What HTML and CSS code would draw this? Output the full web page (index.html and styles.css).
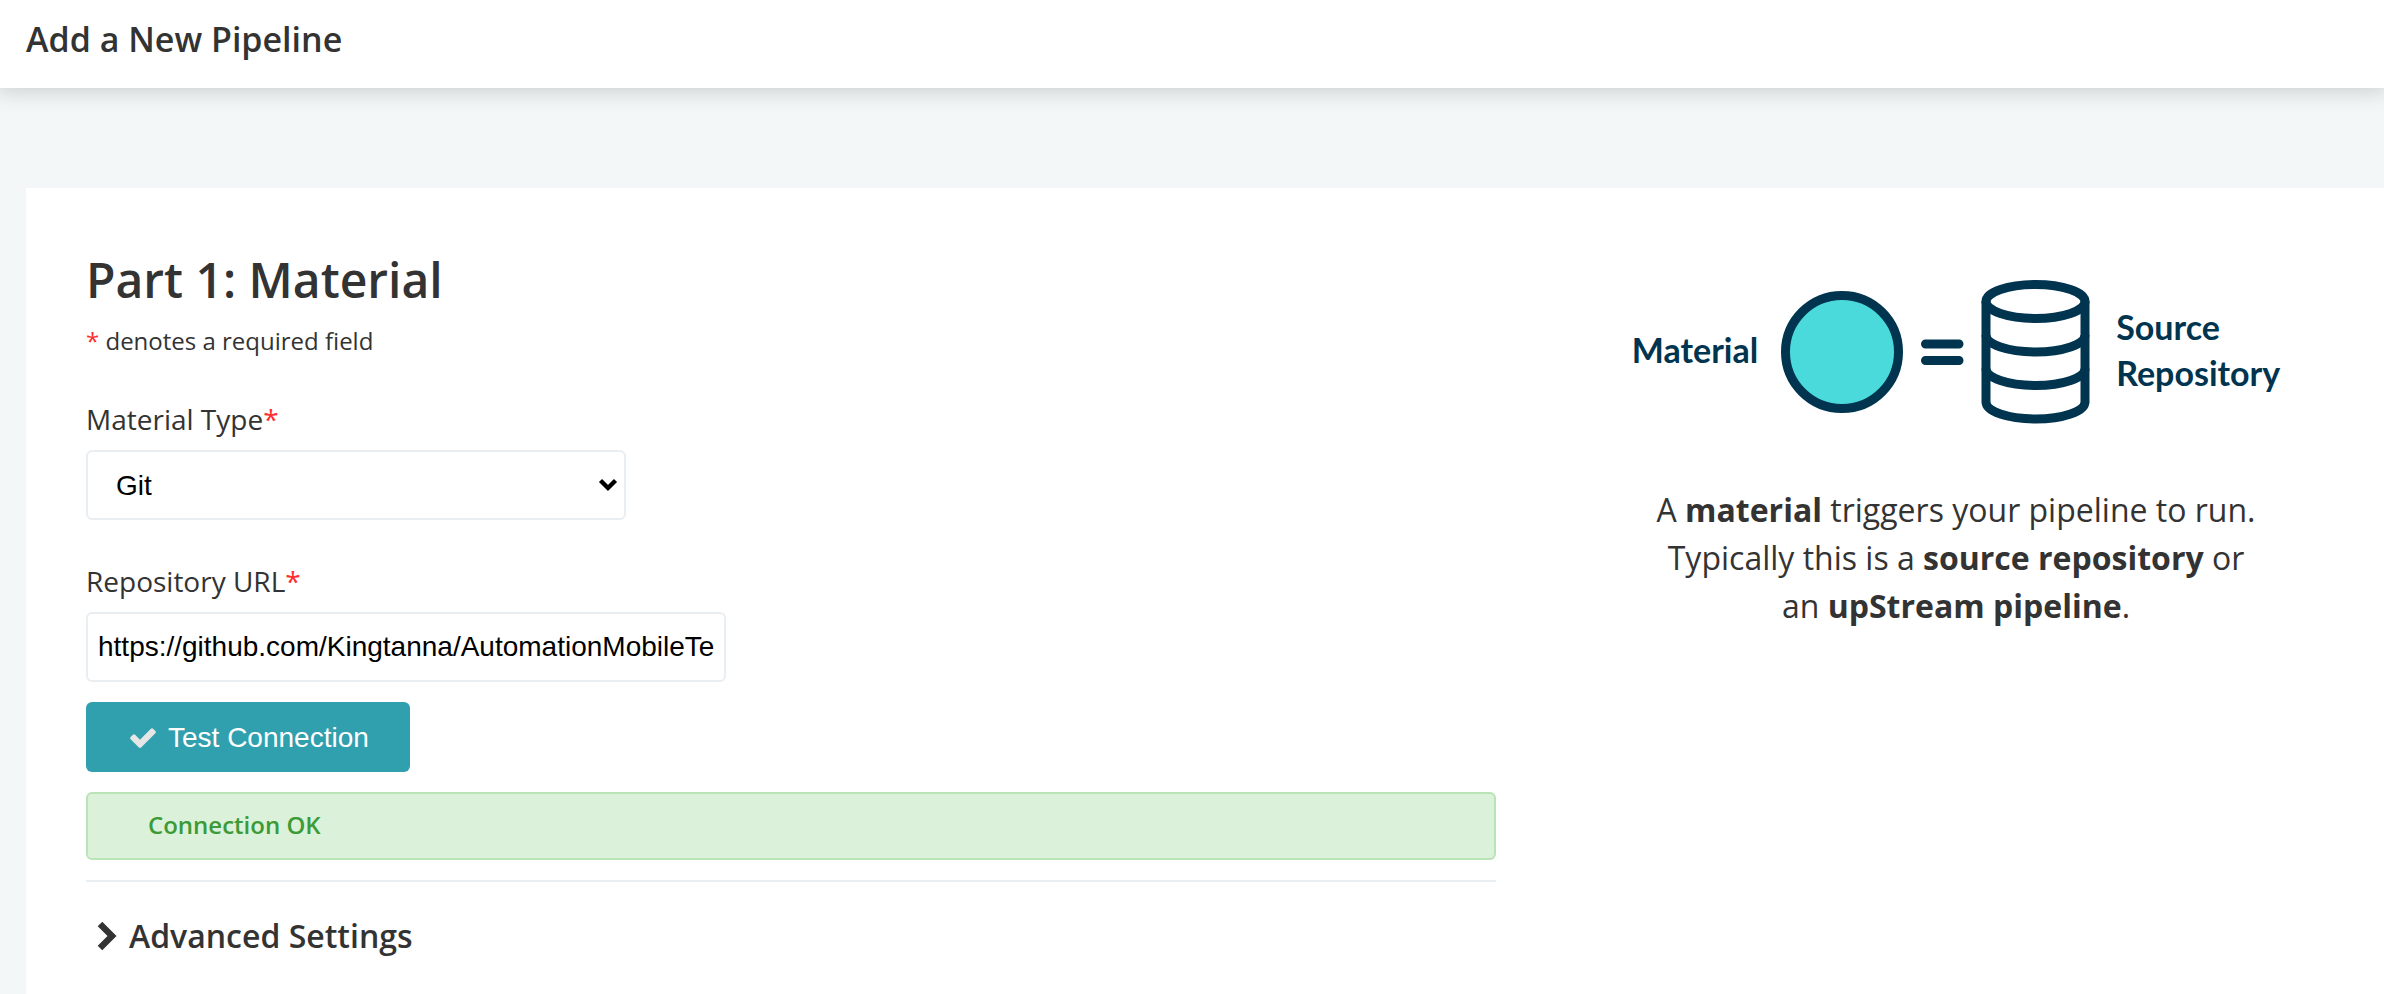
FILE: index.html
```html
<!DOCTYPE html>
<html lang="en">
<head>
<meta charset="utf-8">
<meta name="viewport" content="width=device-width, initial-scale=1">
<title>Add a New Pipeline</title>
<link rel="stylesheet" href="styles.css">
</head>
<body class="page">
<header class="page-header">
  <h1 class="page-title">Add a New Pipeline</h1>
</header>
<main class="content">
  <section class="card">
    <form class="material-form">
      <h2 class="section-title">Part 1: Material</h2>
      <p class="note"><span class="required">*</span> denotes a required field</p>

      <label class="label" for="material-type">Material Type<span class="required">*</span></label>
      <div class="select-wrap">
        <select class="control select" id="material-type">
          <option>Git</option>
        </select>
        <svg class="select-arrow" viewBox="0 0 20 14" aria-hidden="true"><path d="M2.500 2.500 10 10 17.500 2.500" fill="none" stroke="#000" stroke-width="4.400"/></svg>
      </div>

      <label class="label" for="repo-url">Repository URL<span class="required">*</span></label>
      <input class="control url" id="repo-url" type="text" value="https://github.com/Kingtanna/AutomationMobileTe">

      <button class="test-button" type="button">
        <svg class="check" viewBox="121 314 1550 1208" aria-hidden="true"><path fill="#e6e6e6" d="M1671 566q0 40-28 68l-724 724-136 136q-28 28-68 28t-68-28l-136-136-362-362q-28-28-28-68t28-68l136-136q28-28 68-28t68 28l294 295 656-657q28-28 68-28t68 28l136 136q28 28 28 68z"/></svg>
        Test Connection
      </button>

      <div class="message" role="status">Connection OK</div>

      <details class="advanced">
        <summary class="advanced-summary">
          <svg class="chevron" viewBox="0 0 20 30" aria-hidden="true"><path d="M3 3 15 15 3 27" fill="none" stroke="#333" stroke-width="6.400"/></svg>
          Advanced Settings
        </summary>
      </details>
    </form>

    <aside class="help">
      <div class="diagram">
        <span class="diagram-label">Material</span>
        <svg class="diagram-shapes" viewBox="0 0 310 146" aria-hidden="true">
          <g stroke="#00344f" stroke-width="9">
            <circle cx="60" cy="73" r="56.500" fill="#4bdadb"/>
            <path d="M143.500 65h33.500M143.500 81.500h33.500" stroke-linecap="round"/>
            <g fill="none">
              <ellipse cx="253.500" cy="22.500" rx="49.500" ry="17"/>
              <path d="M204 22V123c0 9.400 22 17 49.500 17s49.500-7.600 49.500-17V22"/>
              <path d="M204 56c0 9.400 22 17 49.500 17s49.500-7.600 49.500-17M204 89.500c0 9.400 22 17 49.500 17s49.500-7.600 49.500-17"/>
            </g>
          </g>
        </svg>
        <span class="diagram-label">Source<br>Repository</span>
      </div>
      <p class="help-text">A <strong>material</strong> triggers your pipeline to run. Typically this is a <strong>source repository</strong> or an <strong>upStream pipeline</strong>.</p>
    </aside>
  </section>
</main>
</body>
</html>
```
FILE: styles.css
```css
* {
  box-sizing: border-box;
}

.page {
  display: flex;
  flex-direction: column;
  min-height: 100vh;
  margin: 0;
  background: #f3f7f8;
  color: #333;
  font-family: "Open Sans", sans-serif;
}

.page-header {
  padding: 13px 26px 23px;
  background: #fff;
  box-shadow: 0 0 20px 4px #ccd0d0;
}

.page-title {
  margin: 0;
  font-size: 34px;
  font-weight: 600;
  line-height: 52px;
}

.content {
  display: flex;
  flex: 1;
  padding: 100px 0 0 26px;
}

.card {
  display: grid;
  flex: 1;
  grid-template-columns: minmax(0, 141fr) minmax(0, 80fr);
  gap: 60px;
  padding: 60px 28px 20px 60px;
  background: #fff;
}

.material-form {
  display: flex;
  flex-direction: column;
  align-items: flex-start;
}

.section-title {
  margin: 0;
  font-size: 48px;
  font-weight: 600;
  line-height: 64px;
}

.note {
  margin: 10px 0 0;
  font-size: 24px;
  line-height: 38px;
}

.required {
  color: #ff2d2d;
}

.label {
  margin: 37px 0 9px;
  font-size: 28px;
  line-height: 44px;
}

.control {
  width: 100%;
  height: 70px;
  border: 2px solid #e9eef2;
  border-radius: 6px;
  background: #fff;
  color: #000;
  font-family: "Liberation Sans", Arial, sans-serif;
  font-size: 28px;
}

.select-wrap {
  position: relative;
  width: 540px;
  max-width: 100%;
  margin-bottom: 2px;
}

.select {
  padding: 0 28px;
  appearance: none;
}

.select-arrow {
  position: absolute;
  top: 28px;
  right: 8px;
  width: 20px;
  height: 14px;
  pointer-events: none;
}

.url {
  max-width: 640px;
  padding: 0 10px;
}

.test-button {
  display: flex;
  align-items: center;
  gap: 12px;
  height: 70px;
  margin-top: 20px;
  padding: 2px 41px 0 44px;
  border: 0;
  border-radius: 6px;
  background: #31a0ae;
  color: #fff;
  font-family: "Liberation Sans", Arial, sans-serif;
  font-size: 28px;
}

.check {
  width: 26px;
  height: 20px;
}

.message {
  width: 100%;
  margin: 20px 0;
  padding: 13px 60px 15px;
  border: 2px solid #b9e4b5;
  border-radius: 6px;
  background: #dbf1da;
  color: #3c9a37;
  font-size: 24px;
  font-weight: 600;
  line-height: 36px;
}

.advanced {
  width: 100%;
  padding-top: 29px;
  border-top: 2px solid #e9eef2;
}

.advanced-summary {
  display: flex;
  align-items: center;
  gap: 12px;
  padding-left: 11px;
  font-size: 32px;
  font-weight: 600;
  line-height: 50px;
  list-style: none;
}

.chevron {
  width: 20px;
  height: 30px;
}

.help {
  padding-top: 31px;
}

.diagram {
  display: flex;
  align-items: center;
  justify-content: center;
  gap: 24px;
  color: #00344f;
  font-family: Lato, sans-serif;
  font-size: 34px;
  font-weight: 700;
  line-height: 46px;
}

.diagram-label {
  padding-bottom: 4px;
}

.diagram-shapes {
  flex: none;
  width: 310px;
  height: 146px;
  overflow: visible;
}

.help-text {
  max-width: 610px;
  margin: 61px auto 0;
  font-size: 32px;
  line-height: 48px;
  text-align: center;
}
```
